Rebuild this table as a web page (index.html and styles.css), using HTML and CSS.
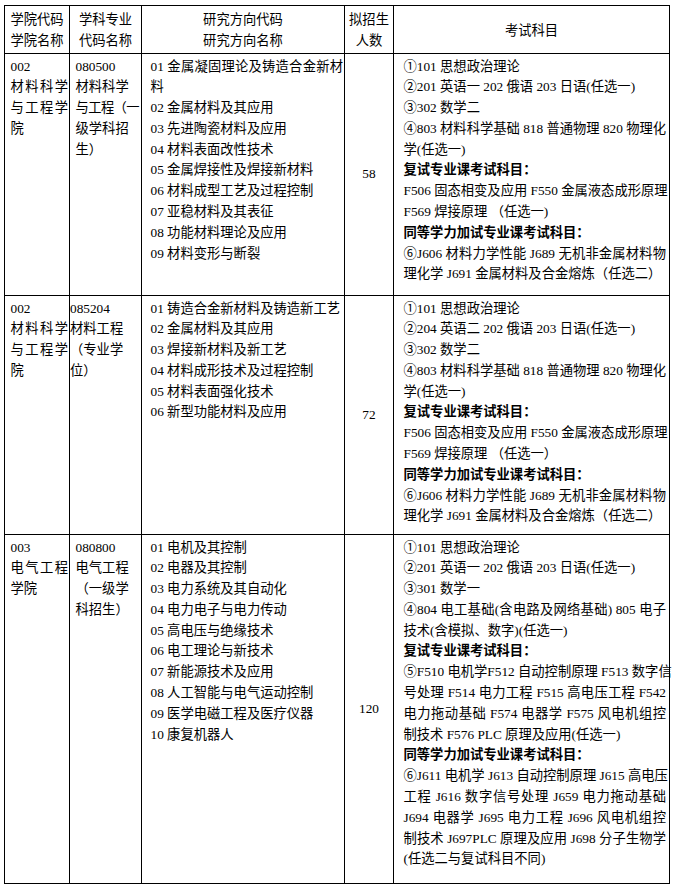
FILE: index.html
```html
<!DOCTYPE html>
<html lang="zh-CN">
<head>
<meta charset="utf-8">
<title>招生目录</title>
<link rel="stylesheet" href="styles.css">
</head>
<body>
<table class="grid">
  <colgroup>
    <col class="c1"><col class="c2"><col class="c3"><col class="c4"><col class="c5">
  </colgroup>
  <thead>
    <tr class="rh">
      <th><span class="ln">学院代码</span><span class="ln">学院名称</span></th>
      <th><span class="ln">学科专业</span><span class="ln">代码名称</span></th>
      <th><span class="ln">研究方向代码</span><span class="ln">研究方向名称</span></th>
      <th><span class="ln">拟招生</span><span class="ln">人数</span></th>
      <th><span class="ln">考试科目</span></th>
    </tr>
  </thead>
  <tbody>
    <tr class="r1">
      <td class="k1">
        <span class="ln">002</span>
        <span class="ln j">材料科学</span>
        <span class="ln j">与工程学</span>
        <span class="ln">院</span>
      </td>
      <td class="k2">
        <span class="ln">080500</span>
        <span class="ln">材料科学</span>
        <span class="ln tight">与工程（一</span>
        <span class="ln">级学科招</span>
        <span class="ln">生）</span>
      </td>
      <td class="k3">
        <span class="ln j">01 金属凝固理论及铸造合金新材</span>
        <span class="ln">料</span>
        <span class="ln">02 金属材料及其应用</span>
        <span class="ln">03 先进陶瓷材料及应用</span>
        <span class="ln">04 材料表面改性技术</span>
        <span class="ln">05 金属焊接性及焊接新材料</span>
        <span class="ln">06 材料成型工艺及过程控制</span>
        <span class="ln">07 亚稳材料及其表征</span>
        <span class="ln">08 功能材料理论及应用</span>
        <span class="ln">09 材料变形与断裂</span>
      </td>
      <td class="k4">58</td>
      <td class="k5">
        <span class="ln">①101 思想政治理论</span>
        <span class="ln">②201 英语一 202 俄语 203 日语(任选一)</span>
        <span class="ln">③302 数学二</span>
        <span class="ln j">④803 材料科学基础 818 普通物理 820 物理化</span>
        <span class="ln">学(任选一)</span>
        <span class="ln b">复试专业课考试科目：</span>
        <span class="ln j">F506 固态相变及应用 F550 金属液态成形原理</span>
        <span class="ln">F569 焊接原理 （任选一)</span>
        <span class="ln b">同等学力加试专业课考试科目：</span>
        <span class="ln j">⑥J606 材料力学性能 J689 无机非金属材料物</span>
        <span class="ln">理化学 J691 金属材料及合金熔炼（任选二）</span>
      </td>
    </tr>
    <tr class="r2">
      <td class="k1">
        <span class="ln">002</span>
        <span class="ln j">材料科学</span>
        <span class="ln j">与工程学</span>
        <span class="ln">院</span>
      </td>
      <td class="k2 flush">
        <span class="ln">085204</span>
        <span class="ln">材料工程</span>
        <span class="ln">（专业学</span>
        <span class="ln">位）</span>
      </td>
      <td class="k3">
        <span class="ln">01 铸造合金新材料及铸造新工艺</span>
        <span class="ln">02 金属材料及其应用</span>
        <span class="ln">03 焊接新材料及新工艺</span>
        <span class="ln">04 材料成形技术及过程控制</span>
        <span class="ln">05 材料表面强化技术</span>
        <span class="ln">06 新型功能材料及应用</span>
      </td>
      <td class="k4">72</td>
      <td class="k5">
        <span class="ln">①101 思想政治理论</span>
        <span class="ln">②204 英语二 202 俄语 203 日语(任选一)</span>
        <span class="ln">③302 数学二</span>
        <span class="ln j">④803 材料科学基础 818 普通物理 820 物理化</span>
        <span class="ln">学(任选一)</span>
        <span class="ln b">复试专业课考试科目：</span>
        <span class="ln j">F506 固态相变及应用 F550 金属液态成形原理</span>
        <span class="ln">F569 焊接原理 （任选一）</span>
        <span class="ln b">同等学力加试专业课考试科目：</span>
        <span class="ln j">⑥J606 材料力学性能 J689 无机非金属材料物</span>
        <span class="ln">理化学 J691 金属材料及合金熔炼（任选二）</span>
      </td>
    </tr>
    <tr class="r3">
      <td class="k1">
        <span class="ln">003</span>
        <span class="ln j">电气工程</span>
        <span class="ln">学院</span>
      </td>
      <td class="k2">
        <span class="ln">080800</span>
        <span class="ln">电气工程</span>
        <span class="ln">（一级学</span>
        <span class="ln">科招生）</span>
      </td>
      <td class="k3">
        <span class="ln">01 电机及其控制</span>
        <span class="ln">02 电器及其控制</span>
        <span class="ln">03 电力系统及其自动化</span>
        <span class="ln">04 电力电子与电力传动</span>
        <span class="ln">05 高电压与绝缘技术</span>
        <span class="ln">06 电工理论与新技术</span>
        <span class="ln">07 新能源技术及应用</span>
        <span class="ln">08 人工智能与电气运动控制</span>
        <span class="ln">09 医学电磁工程及医疗仪器</span>
        <span class="ln">10 康复机器人</span>
      </td>
      <td class="k4">120</td>
      <td class="k5">
        <span class="ln">①101 思想政治理论</span>
        <span class="ln">②201 英语一 202 俄语 203 日语(任选一)</span>
        <span class="ln">③301 数学一</span>
        <span class="ln j">④804 电工基础(含电路及网络基础) 805 电子</span>
        <span class="ln">技术(含模拟、数字)(任选一)</span>
        <span class="ln b">复试专业课考试科目：</span>
        <span class="ln j">⑤F510 电机学F512 自动控制原理 F513 数字信</span>
        <span class="ln j">号处理 F514 电力工程 F515 高电压工程 F542</span>
        <span class="ln j">电力拖动基础 F574 电器学 F575 风电机组控</span>
        <span class="ln">制技术 F576 PLC 原理及应用(任选一)</span>
        <span class="ln b">同等学力加试专业课考试科目：</span>
        <span class="ln j">⑥J611 电机学 J613 自动控制原理 J615 高电压</span>
        <span class="ln j">工程 J616 数字信号处理 J659 电力拖动基础</span>
        <span class="ln j">J694 电器学 J695 电力工程 J696 风电机组控</span>
        <span class="ln j">制技术 J697PLC 原理及应用 J698 分子生物学</span>
        <span class="ln">(任选二与复试科目不同)</span>
      </td>
    </tr>
  </tbody>
</table>
</body>
</html>
```
FILE: styles.css
```css
html, body {
  margin: 0;
  padding: 0;
  background: #fff;
}
body {
  font-family: "Liberation Serif", "Noto Sans CJK SC", serif;
  font-size: 13.3px;
  color: #000;
}
.grid {
  border-collapse: collapse;
  table-layout: fixed;
  width: 665px;
  margin: 5px 0 0 4px;
}
.c1 { width: 65px; }
.c2 { width: 72px; }
.c3 { width: 203px; }
.c4 { width: 49px; }
.c5 { width: 276px; }

.grid th,
.grid td {
  border: 1px solid #000;
  line-height: 20.8px;
  vertical-align: top;
  text-align: left;
  font-weight: 400;
}
.grid th {
  padding: 3px 0 0 0;
  text-align: center;
  vertical-align: middle;
}
.rh { height: 48px; }
.r1 { height: 242px; }
.r2 { height: 239px; }
.r3 { height: 349px; }

.grid .k1 { padding: 2.5px 1px 0 5.5px; }
.grid .k2 { padding: 2.5px 0 0 5.5px; }
.grid .k2.flush { padding-left: 0; }
.grid .k3 { padding: 2.5px 1px 0 8.5px; }
.grid .k4 {
  padding: 0;
  text-align: center;
  vertical-align: middle;
}
.grid .k5 { padding: 2.5px 3px 0 9.5px; }

.ln {
  display: block;
  white-space: nowrap;
}
.j {
  text-align: justify;
  text-align-last: justify;
}
.grid .b { font-weight: 700; }
.tight { letter-spacing: -0.6px; }
```
